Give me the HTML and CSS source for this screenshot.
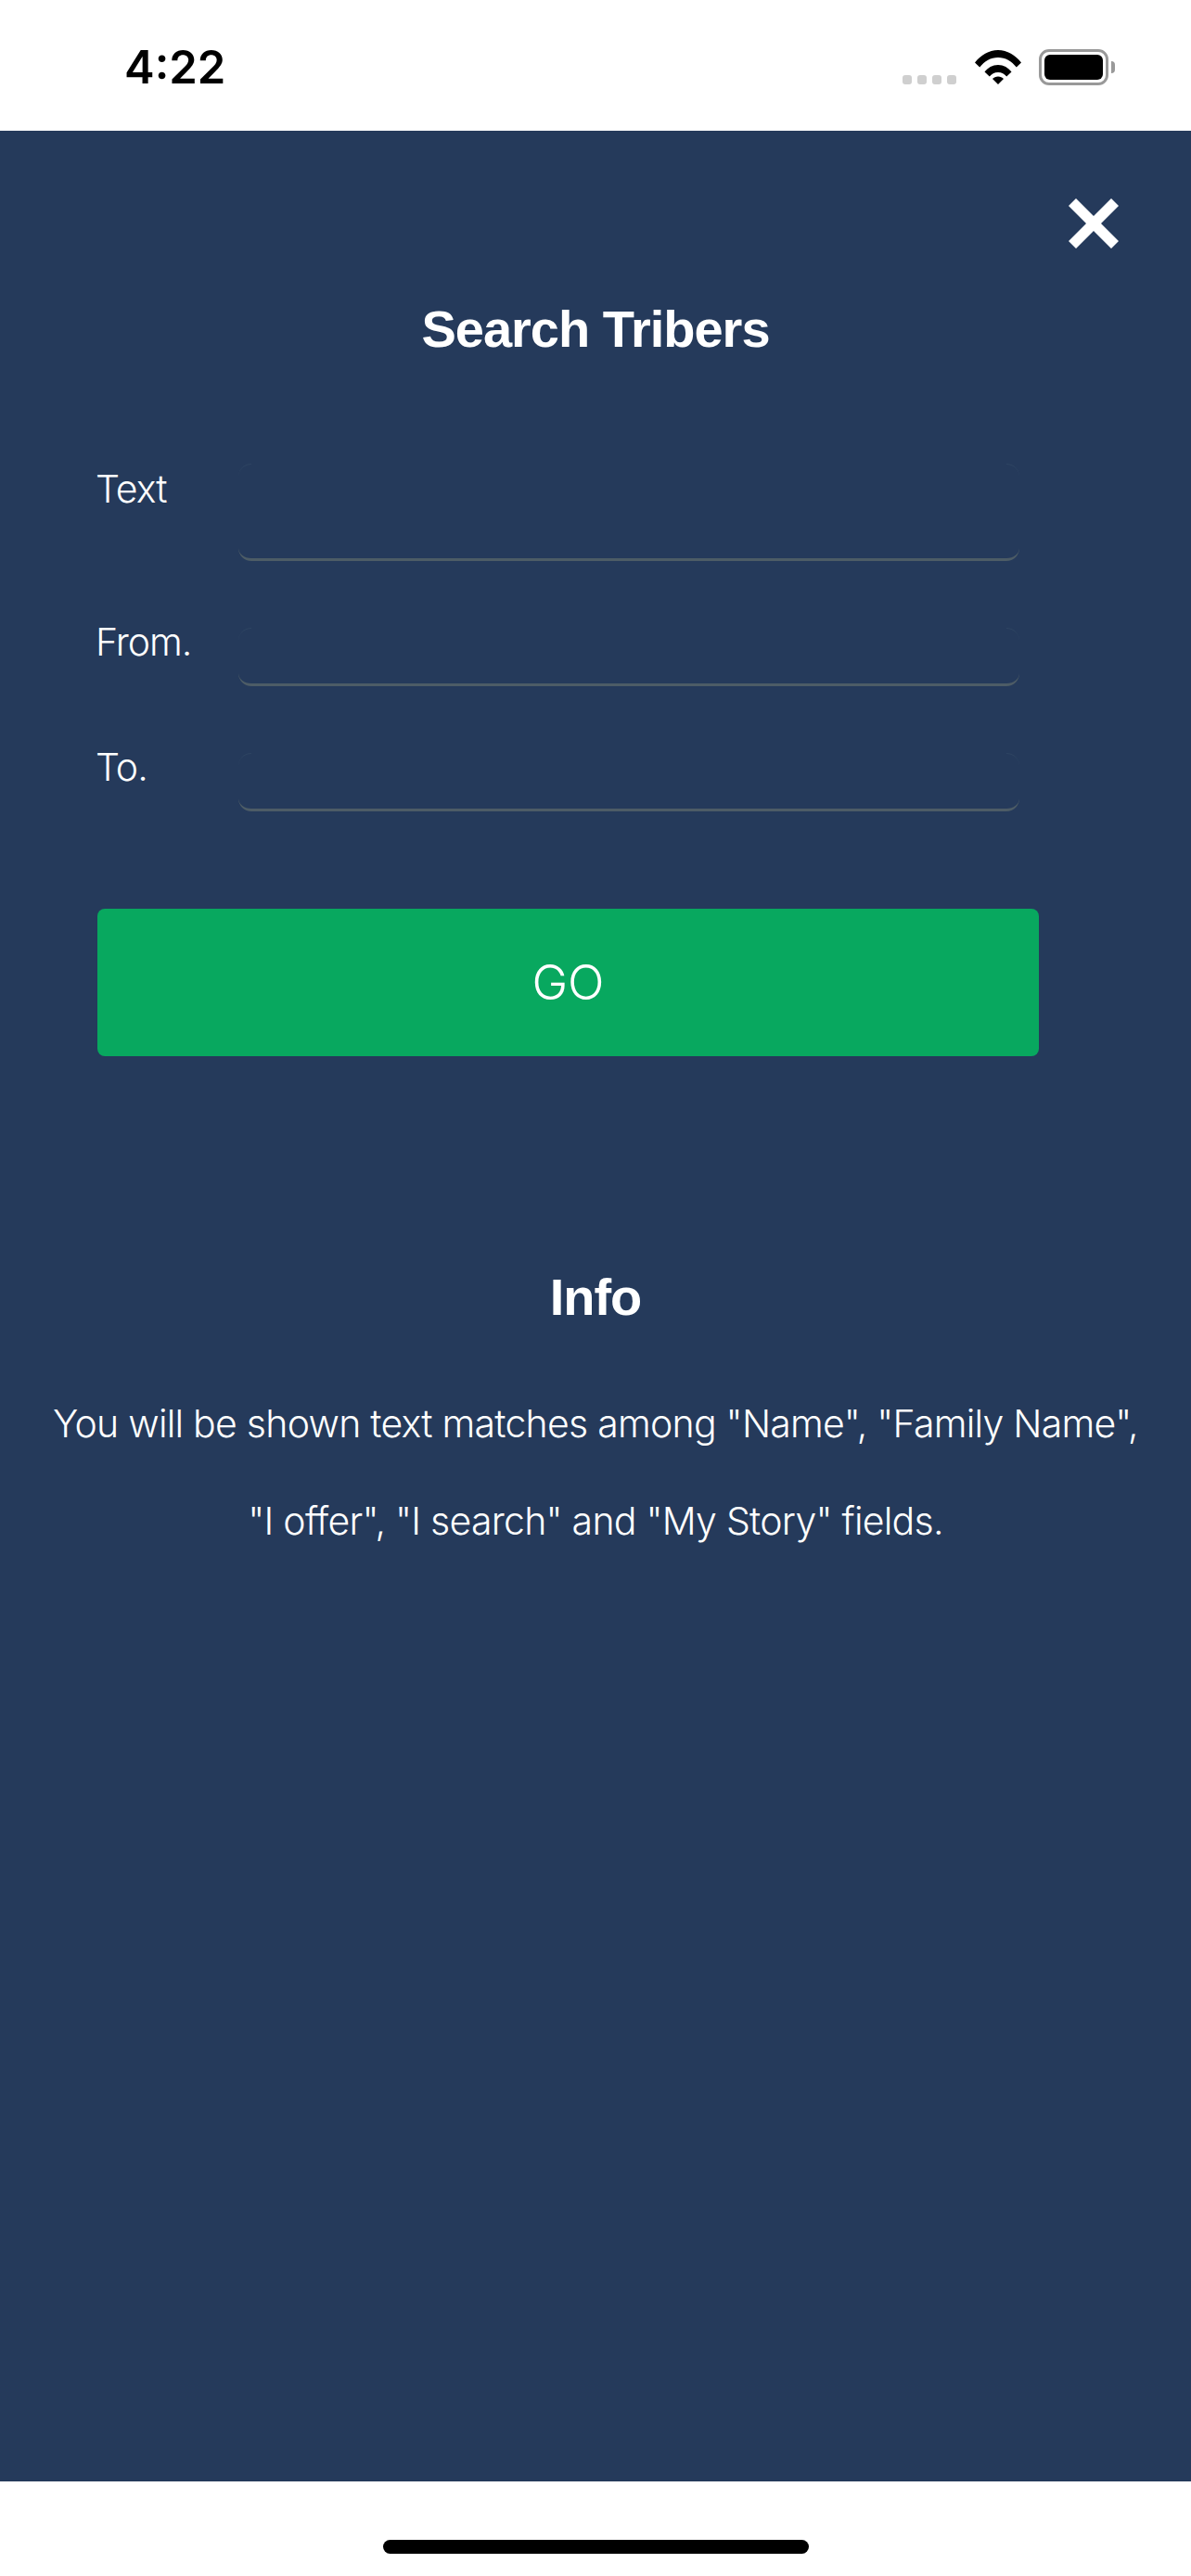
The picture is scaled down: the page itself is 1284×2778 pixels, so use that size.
FILE: index.html
```html
<!DOCTYPE html>
<html lang="en">
<head>
<meta charset="utf-8">
<title>Search Tribers</title>
<link rel="stylesheet" href="styles.css">
</head>
<body>
<div class="phone">
  <header class="status-bar">
    <span class="time">4:22</span>
    <div class="status-icons">
      <div class="signal"><i></i><i></i><i></i><i></i></div>
      <svg class="wifi" viewBox="0 0 50 37" width="50" height="37" aria-hidden="true">
        <path d="M0 13.5 C6.5 5.5 15 0 25 0 C35 0 43.500 5.500 50 13.500 L44.800 18.500 C39.500 12 33 8 25 8 C17 8 10.500 12 5.200 18.500 Z"/>
        <path d="M10.500 23.500 C14 19 19 16 25 16 C31 16 36 19 39.500 23.500 L34.200 28.500 C32 25.800 29 24 25 24 C21 24 18 25.800 15.800 28.500 Z"/>
        <path d="M19 31 C20.500 29.500 22.500 28.500 25 28.500 C27.500 28.500 29.500 29.500 31 31 L25 37 Z"/>
      </svg>
      <div class="battery"><div class="battery-level"></div></div>
      <div class="battery-cap"></div>
    </div>
  </header>
  <main class="screen">
    <div class="close-row">
      <svg class="close" viewBox="0 0 54 54" width="54" height="54" aria-hidden="true">
        <path d="M8 0 L27 19 L46 0 L54 8 L35 27 L54 46 L46 54 L27 35 L8 54 L0 46 L19 27 L0 8 Z"/>
      </svg>
    </div>
    <h1 class="heading title">Search Tribers</h1>
    <form class="form">
      <div class="field field-text">
        <label class="label">Text</label>
        <div class="input input-tall"></div>
      </div>
      <div class="field">
        <label class="label">From.</label>
        <div class="input"></div>
      </div>
      <div class="field">
        <label class="label">To.</label>
        <div class="input"></div>
      </div>
      <button class="go" type="button">GO</button>
    </form>
    <h2 class="heading info-title">Info</h2>
    <p class="info">You will be shown text matches among "Name", "Family Name",<br>"I offer", "I search" and "My Story" fields.</p>
  </main>
  <footer class="home-area"><div class="home-bar"></div></footer>
</div>
</body>
</html>
```
FILE: styles.css
```css
* { box-sizing: border-box; }
html, body { margin: 0; padding: 0; }
body { font-family: "Inter", "Liberation Sans", sans-serif; background: #fff; }
.phone { width: 1284px; height: 2778px; display: flex; flex-direction: column; overflow: hidden; }

.status-bar { height: 141px; flex: none; display: flex; align-items: flex-start; justify-content: space-between; padding: 0 82px 0 134px; background: #fff; }
.time { font-family: "Inter", sans-serif; font-weight: 600; font-size: 49px; line-height: 60px; margin-top: 43px; color: #000; }
.status-icons { display: flex; align-items: flex-start; padding-top: 53px; }
.signal { display: flex; gap: 6px; margin-top: 28px; margin-right: 20px; }
.signal i { display: block; width: 10px; height: 10px; border-radius: 3px; background: #cfcfcf; }
.wifi { display: block; fill: #000; margin-top: 1px; margin-right: 19px; }
.battery { width: 75px; height: 39px; border: 3px solid #999; border-radius: 11px; padding: 3px; background: #fff; }
.battery-level { width: 100%; height: 100%; background: #000; border-radius: 6px; }
.battery-cap { width: 4px; height: 13px; margin: 13px 0 0 3px; background: #999; border-radius: 0 7px 7px 0; }

.screen { flex: 1; background: #253a5b; color: #fff; display: flex; flex-direction: column; }
.close-row { display: flex; justify-content: flex-end; padding: 73px 78px 0 0; }
.close { display: block; fill: #fff; }
.heading { margin: 0; font-family: "Liberation Sans", sans-serif; font-weight: 700; font-size: 56px; line-height: 64px; letter-spacing: -1px; text-align: center; }
.title { margin-top: 55px; }

.form { display: flex; flex-direction: column; padding: 0 164px 0 105px; margin-top: 113px; }
.field { display: flex; margin-bottom: 72px; }
.label { width: 152px; flex: none; font-weight: 300; font-size: 41px; line-height: 50px; letter-spacing: -1px; margin: -10px 0 0 -2px; }
.field-text .label { margin-top: 2px; }
.input { position: relative; flex: 1; height: 63px; margin-left: 2px; margin-right: 21px; border-style: solid; border-width: 0 0 3px; border-color: transparent transparent #4d5c66; border-radius: 14px; }
.input::before, .input::after { content: ""; position: absolute; top: 0; width: 14px; height: 14px; border-top: 1px solid #2f4563; }
.input::before { left: 0; border-top-left-radius: 14px; }
.input::after { right: 0; border-top-right-radius: 14px; }
.input-tall { height: 105px; }
.go { margin-top: 33px; height: 159px; border: 0; border-radius: 8px; background: #08a85f; color: #fff; font-family: "Inter", "Liberation Sans", sans-serif; font-weight: 300; font-size: 52px; }

.info-title { margin-top: 228px; }
.info { margin: 52px 0 0; font-weight: 300; font-size: 41px; line-height: 105px; letter-spacing: -0.75px; text-align: center; }

.home-area { height: 102px; flex: none; background: #fff; display: flex; justify-content: center; padding-top: 63px; }
.home-bar { width: 459px; height: 15px; border-radius: 8px; background: #000; }
```
